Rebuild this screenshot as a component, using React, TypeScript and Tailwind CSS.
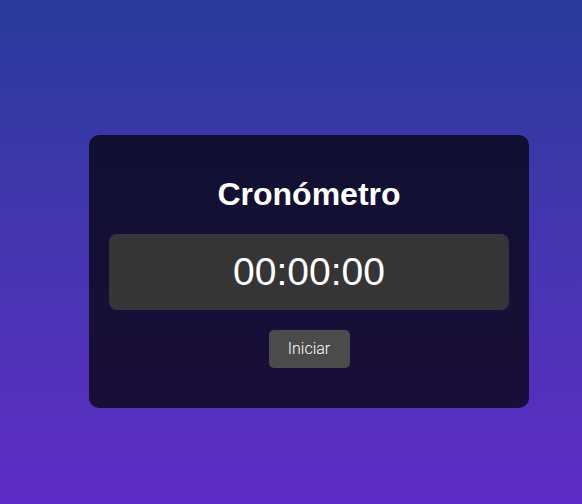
import React from "react";

export default function App() {
  return (
    <div
      className="w-[582px] h-[504px] bg-gradient-to-b from-[#283a9b] to-[#5e2bc6] pl-[89px] pt-[135px]"
      style={{ fontFamily: '"Liberation Sans", Arial, sans-serif' }}
    >
      <div className="w-[440px] rounded-[10px] bg-black/70 p-5 flex flex-col items-center">
        <h1 className="my-[21px] text-[32px] leading-[37px] font-bold text-white">
          Cronómetro
        </h1>
        <div className="w-full h-[76px] rounded-[8px] bg-[#353535] flex items-center justify-center">
          <span className="text-[39px] leading-[46px] text-white">00:00:00</span>
        </div>
        <button
          className="mt-5 mb-5 h-[38px] w-[81px] rounded-[5px] bg-[#4b4b4b] text-[16px] leading-[18px] font-light text-white"
          style={{ fontFamily: 'Roboto, "Liberation Sans", sans-serif' }}
        >
          Iniciar
        </button>
      </div>
    </div>
  );
}
